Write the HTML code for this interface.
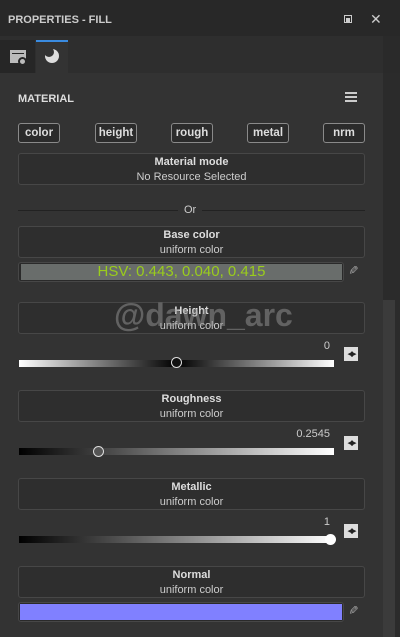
<!DOCTYPE html><html><head><style>
*{margin:0;padding:0;box-sizing:border-box}
body{width:400px;height:637px;background:#2a2a2a;font-family:"Liberation Sans","DejaVu Sans",sans-serif;position:relative;overflow:hidden;color:#ddd}
.a{position:absolute}
.box{position:absolute;left:18px;width:347px;height:32px;border:1px solid #474747;border-radius:3px;background:#2e2e2e;text-align:center;font-size:11px}
.box b{display:block;margin-top:2px;color:#ddd}
.box span{display:block;margin-top:3px;color:#ccc}
.btn{position:absolute;top:123px;height:20px;width:42px;border:1px solid #8a8a8a;border-radius:3px;background:#2b2b2b;font-size:11.5px;font-weight:bold;text-align:center;line-height:18px;color:#ddd}
.val{position:absolute;right:70px;font-size:11px;color:#ccc}
.trk{position:absolute;left:19px;width:315px;height:7px}
.knob{position:absolute;width:11px;height:11px;border-radius:50%}
.ic{position:absolute;left:344px;width:14px;height:14px;background:#ddd;color:#222;font-size:11px;font-weight:bold;line-height:14px;text-align:center;letter-spacing:-2px}
</style></head><body>
<div class="a" style="left:0;top:0;width:400px;height:36px;background:#282828"></div>
<div class="a" style="left:8px;top:14px;font-size:11px;font-weight:bold;color:#ccc">PROPERTIES - FILL</div>
<div class="a" style="left:344px;top:15px;width:8px;height:8px;border:1px solid #ccc"></div>
<div class="a" style="left:346px;top:18px;width:4px;height:4px;background:#ccc"></div>
<div class="a" style="left:370px;top:11px;font-size:14px;color:#ccc">✕</div>
<div class="a" style="left:0;top:36px;width:383px;height:37px;background:#2e2e2e"></div>
<div class="a" style="left:0;top:40px;width:35px;height:33px;background:#262626"></div>
<div class="a" style="left:10px;top:50px;width:16px;height:13px;background:#bbb"></div>
<div class="a" style="left:12px;top:53px;width:12px;height:1px;background:#262626"></div>
<div class="a" style="left:18px;top:57px;width:9px;height:9px;border-radius:50%;background:#bbb;border:2px solid #262626"></div>
<div class="a" style="left:36px;top:40px;width:32px;height:33px;background:#333;border-top:2px solid #3a8be0"></div>
<div class="a" style="left:45px;top:49px;width:14px;height:14px;border-radius:50%;background:#ddd"></div>
<div class="a" style="left:44px;top:47px;width:10px;height:10px;border-radius:50%;background:#333"></div>
<div class="a" style="left:0;top:73px;width:383px;height:564px;background:#333"></div>
<div class="a" style="left:383px;top:73px;width:17px;height:564px;background:#2b2b2b"></div>
<div class="a" style="left:383px;top:300px;width:12px;height:337px;background:#3b3b3b"></div>
<div class="a" style="left:18px;top:93px;font-size:11px;font-weight:bold;color:#ddd">MATERIAL</div>
<div class="a" style="left:345px;top:92px;width:12px;height:2px;background:#ccc;box-shadow:0 4px 0 #ccc,0 8px 0 #ccc"></div>
<div class="btn" style="left:18px">color</div>
<div class="btn" style="left:95px">height</div>
<div class="btn" style="left:171px">rough</div>
<div class="btn" style="left:247px">metal</div>
<div class="btn" style="left:323px">nrm</div>
<div class="box" style="top:153px"><b>Material mode</b><span>No Resource Selected</span></div>
<div class="a" style="left:18px;top:210px;width:160px;height:1px;background:#222"></div>
<div class="a" style="left:202px;top:210px;width:163px;height:1px;background:#222"></div>
<div class="a" style="left:184px;top:204px;font-size:11px;color:#ccc">Or</div>
<div class="box" style="top:226px"><b>Base color</b><span>uniform color</span></div>
<div class="a" style="left:18px;top:262px;width:326px;height:20px;border:1px solid #474747;border-radius:3px;background:#2a2a2a"></div>
<div class="a" style="left:21px;top:264px;width:321px;height:16px;background:#696d6b;color:#9acd1c;font-size:15px;text-align:center;line-height:16px">HSV: 0.443, 0.040, 0.415</div>
<div class="a" style="left:348px;top:263px;font-size:12px;color:#aaa;transform:rotate(90deg)">✎</div>
<div class="box" style="top:302px"><b>Height</b><span>uniform color</span></div>
<div class="val" style="top:340px">0</div>
<div class="trk" style="top:360px;background:linear-gradient(90deg,#fff,#000 50%,#fff)"></div>
<div class="knob" style="left:171px;top:357px;background:#111;border:1px solid #ddd"></div>
<div class="ic" style="top:347px">◂▸</div>
<div class="box" style="top:390px"><b>Roughness</b><span>uniform color</span></div>
<div class="val" style="top:428px">0.2545</div>
<div class="trk" style="top:448px;background:linear-gradient(90deg,#000,#fff)"></div>
<div class="knob" style="left:93px;top:446px;background:#555;border:1px solid #ddd"></div>
<div class="ic" style="top:436px">◂▸</div>
<div class="box" style="top:478px"><b>Metallic</b><span>uniform color</span></div>
<div class="val" style="top:516px">1</div>
<div class="trk" style="top:536px;background:linear-gradient(90deg,#000,#fff)"></div>
<div class="knob" style="left:325px;top:534px;background:#fff"></div>
<div class="ic" style="top:524px">◂▸</div>
<div class="box" style="top:566px"><b>Normal</b><span>uniform color</span></div>
<div class="a" style="left:18px;top:602px;width:326px;height:20px;border:1px solid #474747;border-radius:3px;background:#2a2a2a"></div>
<div class="a" style="left:20px;top:604px;width:322px;height:16px;background:#8080ff"></div>
<div class="a" style="left:348px;top:603px;font-size:12px;color:#aaa;transform:rotate(90deg)">✎</div>
<div class="a" style="left:114px;top:297px;font-size:32px;font-weight:bold;color:rgba(150,150,150,0.5)">@dawn_arc</div>
</body></html>
